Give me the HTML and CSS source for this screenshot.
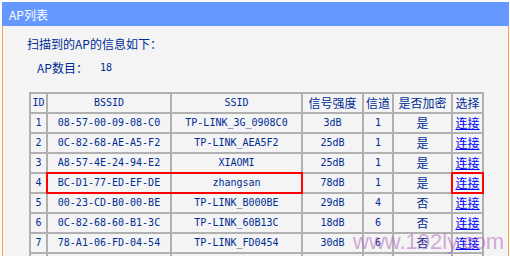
FILE: index.html
```html
<!DOCTYPE html>
<html>
<head>
<meta charset="utf-8">
<link rel="stylesheet" href="styles.css">
</head>
<body>
<div class="panel">
  <div class="panel-head">AP列表</div>
  <div class="panel-body">
    <p class="intro cjk">扫描到的AP的信息如下：</p>
    <p class="count"><span class="cjk">AP数目：</span><span class="num mono">18</span></p>
    <table class="ap-table">
      <colgroup>
        <col class="c-id"><col class="c-bssid"><col class="c-ssid"><col class="c-sig"><col class="c-ch"><col class="c-enc"><col class="c-sel">
      </colgroup>
      <thead>
        <tr><th class="mono">ID</th><th class="mono">BSSID</th><th class="mono">SSID</th><th class="cjk">信号强度</th><th class="cjk">信道</th><th class="cjk">是否加密</th><th class="cjk">选择</th></tr>
      </thead>
      <tbody>
        <tr><td>1</td><td>08-57-00-09-08-C0</td><td>TP-LINK_3G_0908C0</td><td>3dB</td><td>1</td><td class="cjk">是</td><td class="cjk"><a href="#">连接</a></td></tr>
        <tr><td>2</td><td>0C-82-68-AE-A5-F2</td><td>TP-LINK_AEA5F2</td><td>25dB</td><td>1</td><td class="cjk">是</td><td class="cjk"><a href="#">连接</a></td></tr>
        <tr><td>3</td><td>A8-57-4E-24-94-E2</td><td>XIAOMI</td><td>25dB</td><td>1</td><td class="cjk">是</td><td class="cjk"><a href="#">连接</a></td></tr>
        <tr><td>4</td><td class="hl-pair">BC-D1-77-ED-EF-DE</td><td>zhangsan</td><td>78dB</td><td>1</td><td class="cjk">是</td><td class="cjk hl-cell"><a href="#">连接</a></td></tr>
        <tr><td>5</td><td>00-23-CD-B0-00-BE</td><td>TP-LINK_B000BE</td><td>29dB</td><td>4</td><td class="cjk">否</td><td class="cjk"><a href="#">连接</a></td></tr>
        <tr><td>6</td><td>0C-82-68-60-B1-3C</td><td>TP-LINK_60B13C</td><td>18dB</td><td>6</td><td class="cjk">否</td><td class="cjk"><a href="#">连接</a></td></tr>
        <tr><td>7</td><td>78-A1-06-FD-04-54</td><td>TP-LINK_FD0454</td><td>30dB</td><td>6</td><td class="cjk">否</td><td class="cjk"><a href="#">连接</a></td></tr>
        <tr><td>&nbsp;</td><td>&nbsp;</td><td>&nbsp;</td><td>&nbsp;</td><td>&nbsp;</td><td>&nbsp;</td><td>&nbsp;</td></tr>
      </tbody>
    </table>
  </div>
</div>
<div class="watermark">www.192ly.com</div>
</body>
</html>
```
FILE: styles.css
```css
html, body {
  margin: 0;
  padding: 0;
  background: #ffffff;
  overflow: hidden;
}
body {
  width: 510px;
  height: 256px;
  position: relative;
  color: #002c94;
  font-family: "DejaVu Sans Mono", "Liberation Mono", monospace;
  font-size: 10px;
}
.cjk {
  font-family: "Noto Sans CJK SC", "Noto Sans", sans-serif;
  font-size: 12px;
}
.mono {
  font-family: "DejaVu Sans Mono", "Liberation Mono", monospace;
  font-size: 10px;
}
.panel {
  margin: 2px 0 0 2px;
  width: 507px;
}
.panel-head {
  height: 24px;
  background: #6699ff;
  color: #ffffff;
  font-family: "Noto Sans CJK SC", "Noto Sans", sans-serif;
  font-size: 12px;
  display: flex;
  align-items: center;
  padding-left: 7px;
}
.panel-body {
  background: #f4f4f4;
  border-left: 1px solid #ffa040;
  border-right: 1px solid #ffa040;
  padding: 8px 0 0 0;
  height: 240px;
}
.intro {
  margin: 0 0 0 24px;
  line-height: 20px;
}
.count {
  margin: 4px 0 0 34px;
  line-height: 20px;
  display: flex;
  align-items: center;
}
.count .num {
  margin-left: 12px;
}
.ap-table {
  margin: 14px 0 0 26px;
  border-collapse: separate;
  border-spacing: 0;
  table-layout: fixed;
  width: 455px;
  border-left: 2px solid #b0b0b0;
  border-top: 2px solid #b0b0b0;
}
.c-id { width: 17px; }
.c-bssid { width: 124px; }
.c-ssid { width: 131px; }
.c-sig { width: 61px; }
.c-ch { width: 30px; }
.c-enc { width: 59px; }
.c-sel { width: 31px; }
.ap-table th,
.ap-table td {
  box-sizing: border-box;
  height: 20px;
  padding: 0;
  border-right: 2px solid #b0b0b0;
  border-bottom: 2px solid #b0b0b0;
  text-align: center;
  vertical-align: middle;
  white-space: nowrap;
  overflow: visible;
  font-weight: normal;
  line-height: 16px;
}
.ap-table td.cjk,
.ap-table th.cjk {
  font-size: 12px;
}
.ap-table a {
  color: #0000ff;
  text-decoration: underline;
}
.hl-pair,
.hl-cell {
  position: relative;
}
.hl-pair::after {
  content: "";
  position: absolute;
  left: -2px;
  top: -2px;
  width: 257px;
  height: 22px;
  border: 2px solid #ff0000;
  box-sizing: border-box;
}
.hl-cell::after {
  content: "";
  position: absolute;
  left: -2px;
  top: -2px;
  width: 33px;
  height: 22px;
  border: 2px solid #ff0000;
  box-sizing: border-box;
}
.watermark {
  position: absolute;
  left: 353px;
  top: 229px;
  font-family: "Liberation Sans", sans-serif;
  font-size: 22px;
  color: rgba(175, 90, 185, 0.5);
  white-space: nowrap;
}
```
